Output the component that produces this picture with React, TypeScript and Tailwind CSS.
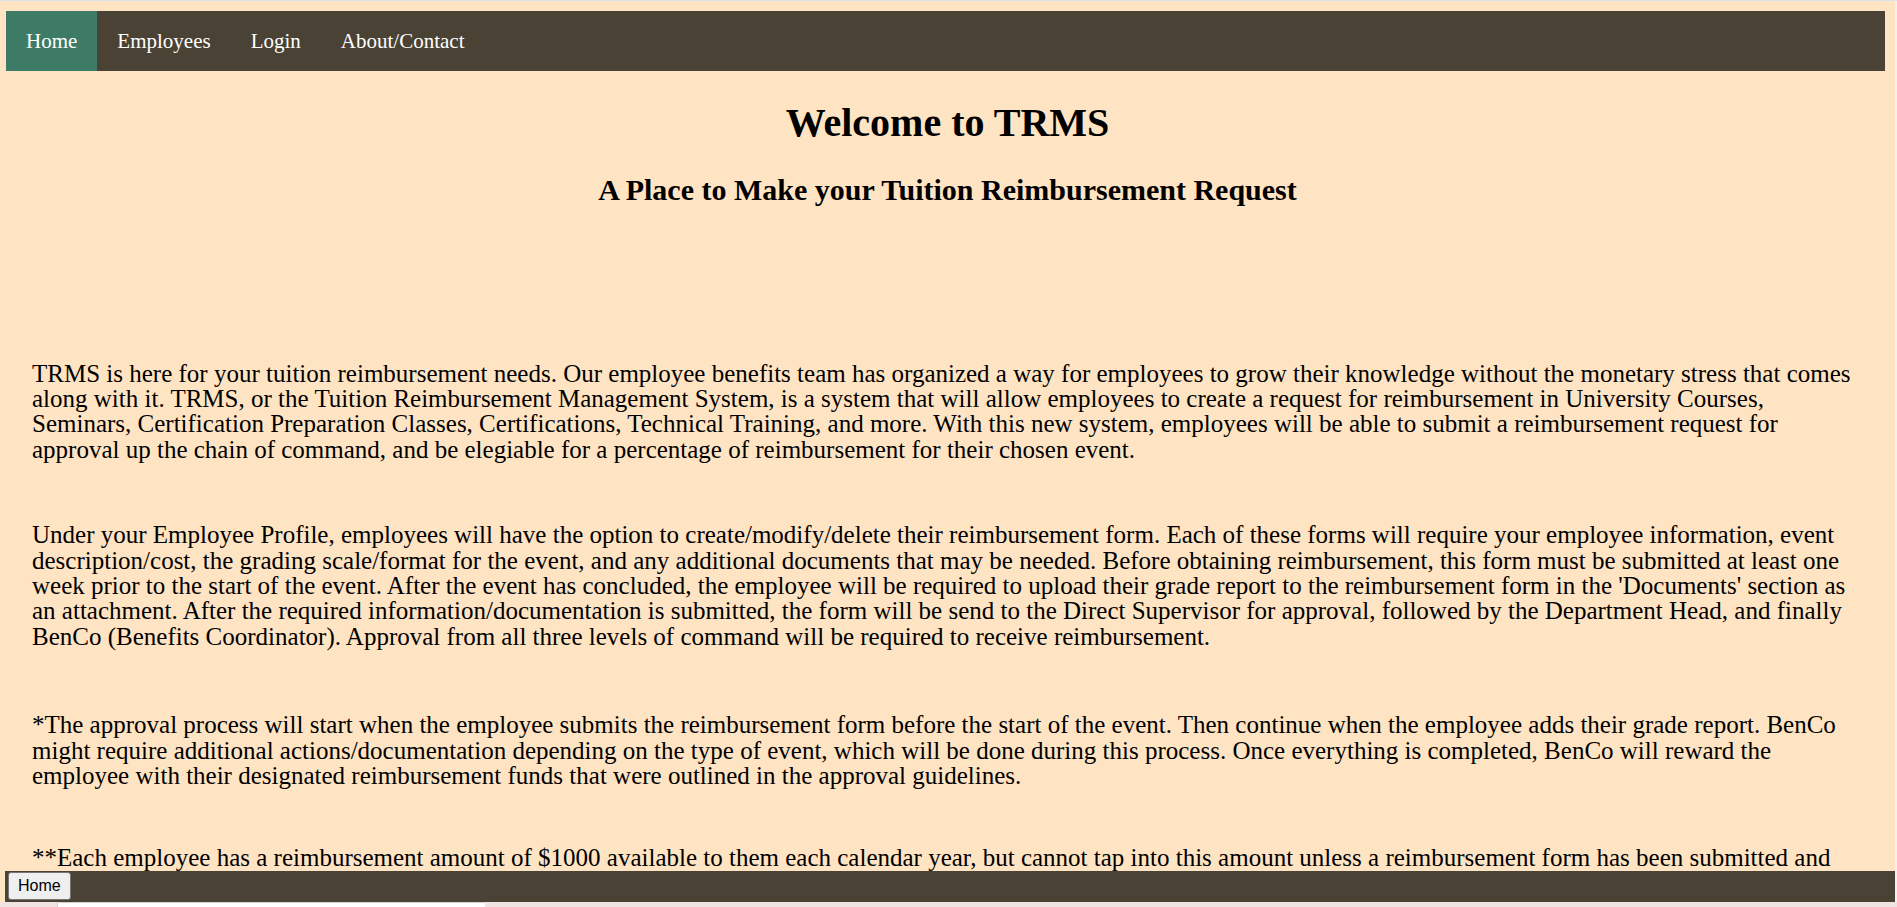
export default function App() {
  const serif = { fontFamily: '"Liberation Serif", "Times New Roman", serif' };
  return (
    <div className="relative flex h-[907px] w-[1897px] flex-col overflow-hidden bg-[#f1f1f1]" style={serif}>
      <div className="h-px w-full shrink-0 bg-[#dce3e8]" />
      <div className="relative w-[1895px] flex-1 overflow-hidden bg-[#ffe4c4] text-black">
        <nav className="ml-[6px] mr-[10px] mt-[10px] flex h-[60px] bg-[#4a4234] pt-px text-[21px] text-white">
          <a className="-mt-px flex items-center bg-[#3d7b67] px-5 pt-px">Home</a>
          <a className="flex items-center px-5">Employees</a>
          <a className="flex items-center px-5">Login</a>
          <a className="flex items-center px-5">About/Contact</a>
        </nav>
        <h1 className="mt-[29px] text-center text-[40px] font-bold leading-[1.15]">Welcome to TRMS</h1>
        <h2 className="mt-[27px] text-center text-[30px] font-bold leading-[1.15]">
          A Place to Make your Tuition Reimbursement Request
        </h2>
        <div className="mt-[153px] flex flex-col whitespace-nowrap pl-[32px] pr-[10px] text-[25px] leading-[25.4px]">
          <p>
            TRMS is here for your tuition reimbursement needs. Our employee benefits team has organized a way for
            employees to grow their knowledge without the monetary stress that comes
            <br />
            along with it. TRMS, or the Tuition Reimbursement Management System, is a system that will allow employees to
            create a request for reimbursement in University Courses,
            <br />
            Seminars, Certification Preparation Classes, Certifications, Technical Training, and more. With this new
            system, employees will be able to submit a reimbursement request for
            <br />
            approval up the chain of command, and be elegiable for a percentage of reimbursement for their chosen event.
          </p>
          <p className="mt-[60px]">
            Under your Employee Profile, employees will have the option to create/modify/delete their reimbursement
            form. Each of these forms will require your employee information, event
            <br />
            description/cost, the grading scale/format for the event, and any additional documents that may be needed.
            Before obtaining reimbursement, this form must be submitted at least one
            <br />
            week prior to the start of the event. After the event has concluded, the employee will be required to upload
            their grade report to the reimbursement form in the 'Documents' section as
            <br />
            an attachment. After the required information/documentation is submitted, the form will be send to the
            Direct Supervisor for approval, followed by the Department Head, and finally
            <br />
            BenCo (Benefits Coordinator). Approval from all three levels of command will be required to receive
            reimbursement.
          </p>
          <p className="mt-[63px]">
            *The approval process will start when the employee submits the reimbursement form before the start of the
            event. Then continue when the employee adds their grade report. BenCo
            <br />
            might require additional actions/documentation depending on the type of event, which will be done during
            this process. Once everything is completed, BenCo will reward the
            <br />
            employee with their designated reimbursement funds that were outlined in the approval guidelines.
          </p>
          <p className="mt-[57px]">
            **Each employee has a reimbursement amount of $1000 available to them each calendar year, but cannot tap
            into this amount unless a reimbursement form has been submitted and
            <br />
            approved.
          </p>
        </div>
        <footer className="absolute bottom-0 left-[5px] right-0 flex h-[31px] items-start bg-[#4a4234] pl-[3px] pt-px">
          <button
            className="flex h-[28px] items-center rounded-[3px] border border-[#767676] bg-[#efefef] px-[9px] text-[16px] text-black"
            style={{ fontFamily: '"Liberation Sans", Arial, sans-serif' }}
          >
            Home
          </button>
        </footer>
      </div>
      <div className="flex h-[5px] w-full shrink-0 bg-[#f0e4e2]">
        <div className="w-[57px]" />
        <div className="w-[428px] border-l border-t border-[#d8d0d0] bg-white" />
      </div>
    </div>
  );
}
